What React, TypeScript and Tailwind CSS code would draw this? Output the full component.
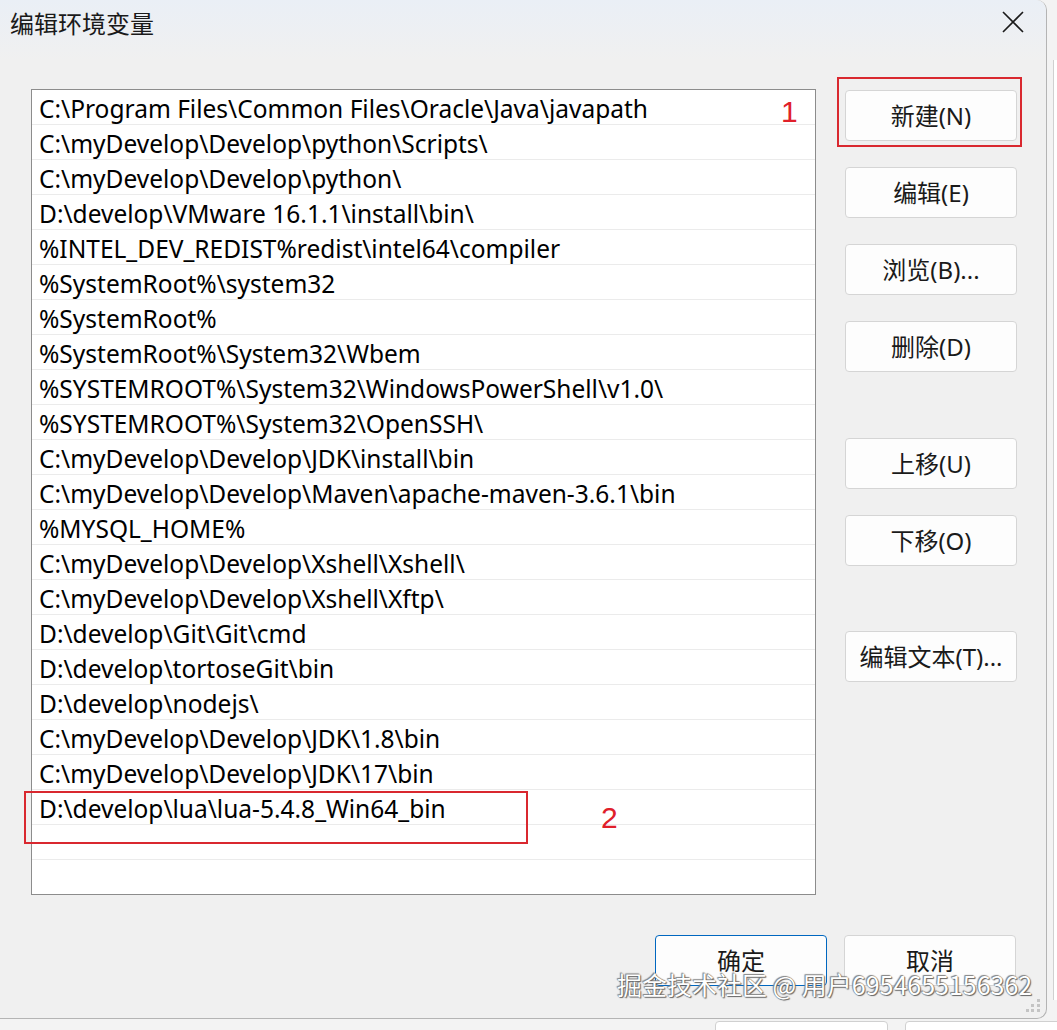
import React from 'react';

const paths = [
  'C:\\Program Files\\Common Files\\Oracle\\Java\\javapath',
  'C:\\myDevelop\\Develop\\python\\Scripts\\',
  'C:\\myDevelop\\Develop\\python\\',
  'D:\\develop\\VMware 16.1.1\\install\\bin\\',
  '%INTEL_DEV_REDIST%redist\\intel64\\compiler',
  '%SystemRoot%\\system32',
  '%SystemRoot%',
  '%SystemRoot%\\System32\\Wbem',
  '%SYSTEMROOT%\\System32\\WindowsPowerShell\\v1.0\\',
  '%SYSTEMROOT%\\System32\\OpenSSH\\',
  'C:\\myDevelop\\Develop\\JDK\\install\\bin',
  'C:\\myDevelop\\Develop\\Maven\\apache-maven-3.6.1\\bin',
  '%MYSQL_HOME%',
  'C:\\myDevelop\\Develop\\Xshell\\Xshell\\',
  'C:\\myDevelop\\Develop\\Xshell\\Xftp\\',
  'D:\\develop\\Git\\Git\\cmd',
  'D:\\develop\\tortoseGit\\bin',
  'D:\\develop\\nodejs\\',
  'C:\\myDevelop\\Develop\\JDK\\1.8\\bin',
  'C:\\myDevelop\\Develop\\JDK\\17\\bin',
  'D:\\develop\\lua\\lua-5.4.8_Win64_bin',
  '',
  '',
];

const font = { fontFamily: '"Noto Sans", "Noto Sans CJK SC", sans-serif' };

function Btn({ label, focused }: { label: string; focused?: boolean }) {
  return (
    <button
      className={
        'w-[172px] h-[51px] rounded-[4px] bg-[#fdfdfd] text-[24px] leading-none text-[#1a1a1a] flex items-center justify-center border ' +
        (focused ? 'border-[#0067c0]' : 'border-[#d5d5d5]')
      }
    >
      {label}
    </button>
  );
}

export default function App() {
  return (
    <div className="w-[1057px] h-[1030px] bg-[#f3f3f3] relative overflow-hidden" style={font}>
      {/* background window peeking out */}
      <div className="absolute right-0 top-[60px] w-[4px] h-[940px] border-l border-[#d0d0d0] bg-white" />
      <div className="absolute left-[715px] top-[1021px] w-[173px] h-[20px] bg-white border border-[#d0d0d0] rounded-[4px]" />
      <div className="absolute left-[905px] top-[1021px] w-[173px] h-[20px] bg-white border border-[#d0d0d0] rounded-[4px]" />

      {/* dialog */}
      <div className="w-[1047px] h-[1019px] bg-[#f0f0f0] border-r border-b border-[#b4b4b4] rounded-br-[10px] rounded-tr-[10px] relative flex flex-col">
        <div className="h-[60px] bg-gradient-to-b from-[#eaeff6] to-[#f0f0f0] rounded-tr-[10px] flex items-start justify-between pl-[10px] pr-[22px] pt-[5px]">
          <span className="text-[24px] text-[#1a1a1a]" style={{ fontFamily: '"Noto Sans CJK SC", sans-serif' }}>编辑环境变量</span>
          <svg width="22" height="22" viewBox="0 0 22 22" className="mt-[6px]">
            <path d="M1 1 L21 21 M21 1 L1 21" stroke="#1a1a1a" strokeWidth="1.6" />
          </svg>
        </div>

        <div className="flex pl-[31px] pt-[29px]">
          {/* list */}
          <div className="w-[785px] h-[806px] bg-white border border-[#8c8c8c] overflow-hidden">
            {paths.map((p, i) => (
              <div key={i} className="h-[35px] border-b border-[#ebebeb] pl-[7px] pt-[2px] text-[24.5px] leading-[33px] text-black whitespace-nowrap">
                {p}
              </div>
            ))}
          </div>

          {/* buttons */}
          <div className="ml-[29px] pt-[1px] flex flex-col">
            <div className="flex flex-col gap-[26px]">
              <Btn label="新建(N)" />
              <Btn label="编辑(E)" />
              <Btn label="浏览(B)..." />
              <Btn label="删除(D)" />
            </div>
            <div className="flex flex-col gap-[26px] mt-[66px]">
              <Btn label="上移(U)" />
              <Btn label="下移(O)" />
            </div>
            <div className="mt-[65px]">
              <Btn label="编辑文本(T)..." />
            </div>
          </div>
        </div>

        <div className="flex justify-end gap-[17px] pr-[30px] mt-[40px]">
          <Btn label="确定" focused />
          <Btn label="取消" />
        </div>

        {/* resize grip */}
        <div className="absolute right-[6px] bottom-[6px] grid grid-cols-3 gap-[2px] w-[14px]">
          <span /><span /><span className="w-[3px] h-[3px] bg-[#c4c4c4]" />
          <span /><span className="w-[3px] h-[3px] bg-[#c4c4c4]" /><span className="w-[3px] h-[3px] bg-[#c4c4c4]" />
          <span className="w-[3px] h-[3px] bg-[#c4c4c4]" /><span className="w-[3px] h-[3px] bg-[#c4c4c4]" /><span className="w-[3px] h-[3px] bg-[#c4c4c4]" />
        </div>
      </div>

      {/* annotations */}
      <div className="absolute left-[837px] top-[77px] w-[185px] h-[70px] border-2 border-[#d9282f]" />
      <div className="absolute left-[24px] top-[791px] w-[504px] h-[53px] border-2 border-[#d9282f]" />
      <span className="absolute left-[781px] top-[97px] text-[30px] leading-none text-[#e0202a]" style={{ fontFamily: '"Liberation Sans", sans-serif' }}>1</span>
      <span className="absolute left-[601px] top-[803px] text-[30px] leading-none text-[#e0202a]" style={{ fontFamily: '"Liberation Sans", sans-serif' }}>2</span>

      {/* watermark */}
      <span
        className="absolute left-[617px] top-[972px] text-[25px] leading-none text-white whitespace-nowrap"
        style={{ fontFamily: '"Noto Sans CJK SC", sans-serif', textShadow: '0 0 1px #555, 1px 1px 1px #666, -1px -1px 1px #888' }}
      >
        掘金技术社区 @ 用户6954655156362
      </span>
    </div>
  );
}
